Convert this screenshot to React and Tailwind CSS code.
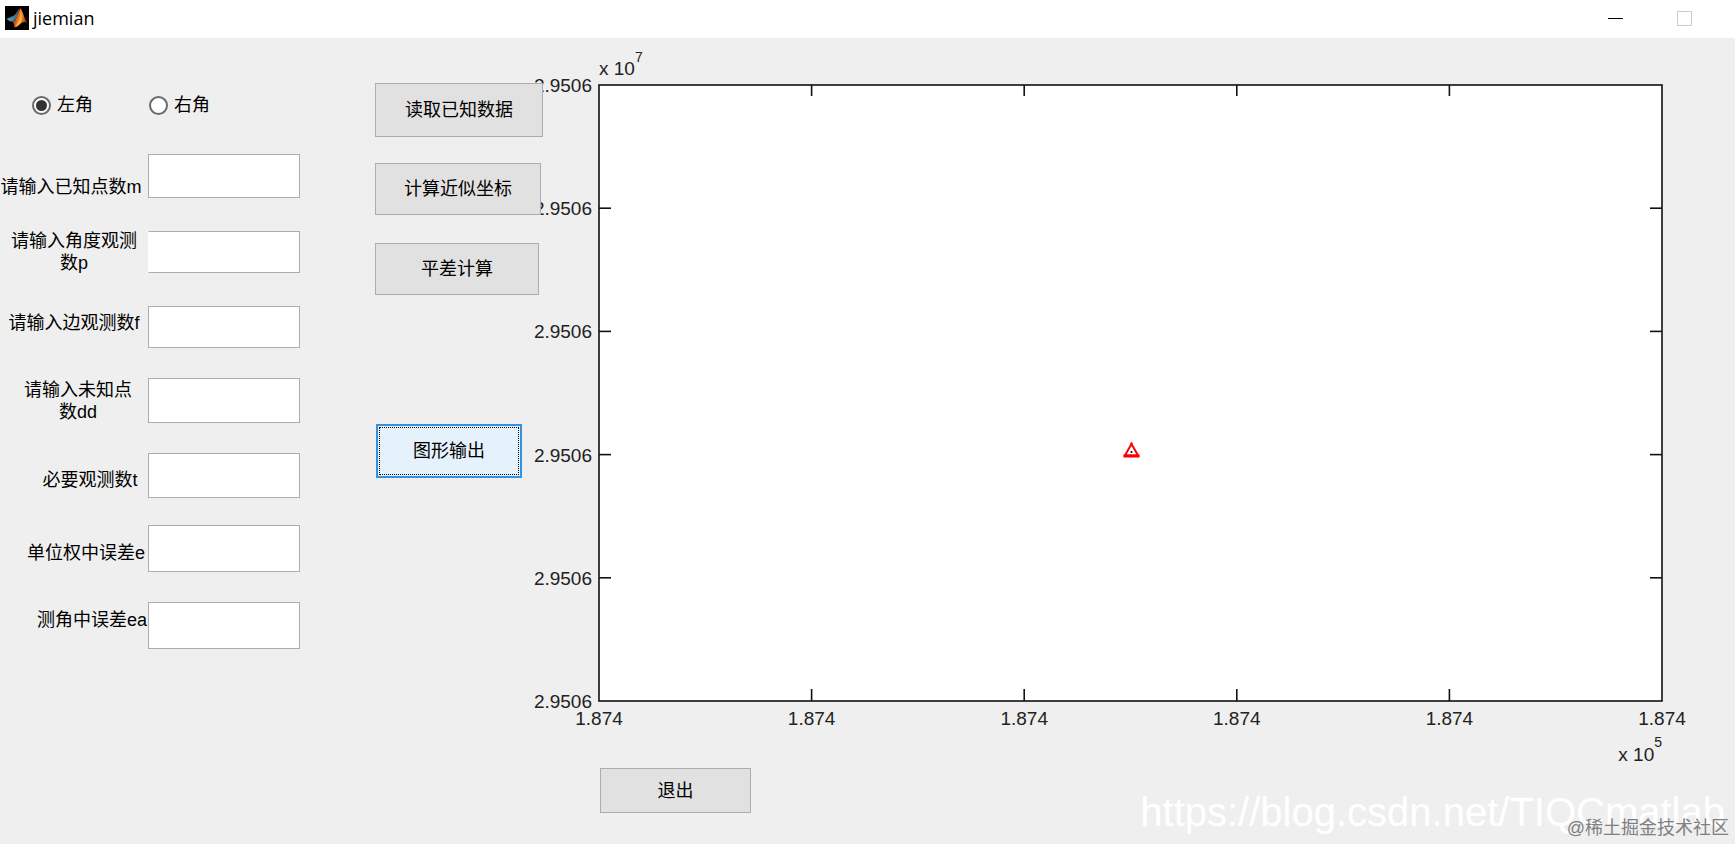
import React from "react";

const FIELDS = [
  { id: "m", lines: ["请输入已知点数m"], row: "items-end", label: "pr-1.5", input: "h-11" },
  { id: "p", lines: ["请输入角度观测", "数p"], row: "mt-8 items-center", label: "", input: "h-[42px] border-l-white" },
  { id: "f", lines: ["请输入边观测数f"], row: "mt-8 items-center", label: "pb-2", input: "h-[42px]" },
  { id: "dd", lines: ["请输入未知点", "数dd"], row: "mt-[30px] items-center", label: "pl-2", input: "h-[45px]" },
  { id: "t", lines: ["必要观测数t"], row: "mt-[30px] items-center", label: "pt-2 pl-8", input: "h-[45px]" },
  { id: "e", lines: ["单位权中误差e"], row: "mt-[27px] items-center", label: "pt-2 pl-6", input: "h-[47px]" },
  { id: "ea", lines: ["测角中误差ea"], row: "mt-[30px] items-center", label: "pb-3 pl-9", input: "h-[47px]" },
];

const STEPS = [0, 20, 40, 60, 80, 100];

function MatlabLogo() {
  return (
    <svg viewBox="0 0 24 24" className="mt-1.5 h-6 w-6 shrink-0 self-start" aria-hidden="true">
      <defs>
        <linearGradient id="flame" x1="0" y1="0" x2="1" y2="0.3">
          <stop offset="0" stopColor="#6b1d10" />
          <stop offset="0.45" stopColor="#e8641b" />
          <stop offset="0.65" stopColor="#f79a2c" />
          <stop offset="1" stopColor="#a8300f" />
        </linearGradient>
        <linearGradient id="wing" x1="0" y1="0" x2="1" y2="0">
          <stop offset="0" stopColor="#58a9c4" />
          <stop offset="1" stopColor="#27617f" />
        </linearGradient>
      </defs>
      <rect width="24" height="24" fill="#000" />
      <path d="M1.5 13 L7.5 10.2 Q9.5 9.6 11 7.4 Q12.6 4.4 14.6 2.6 L11.8 11.6 L8.2 16 Q6.6 14.8 5.2 15.4 Z" fill="url(#wing)" />
      <path d="M15.2 2.2 C17.4 3.6 18.6 11.2 22.4 17.4 C19.6 15 17.4 16 15.2 18 C13.2 19.8 11.8 21.6 9.4 21.2 C9.4 18.6 8.6 17 7.8 16.2 C11 14.6 12.6 8 15.2 2.2 Z" fill="url(#flame)" />
      <path d="M15 5 C15.6 9 15 14 10.4 20.4 C13 20 15 17.6 16.4 15.6 C17 11.6 16.2 8 15 5 Z" fill="#f9b13c" />
    </svg>
  );
}

function Radio({ label, checked }) {
  return (
    <label className="flex items-center gap-1.5 leading-5">
      <input
        type="radio"
        name="angle"
        defaultChecked={checked}
        className="grid h-[19px] w-[19px] appearance-none place-items-center rounded-full border-2 border-[#6a6a6a] bg-white before:h-[11px] before:w-[11px] before:rounded-full checked:before:bg-[#333333]"
      />
      {label}
    </label>
  );
}

function PushButton({ children, className }) {
  return (
    <button type="button" className={`border border-[#adadad] bg-[#e1e1e1] ${className}`}>
      {children}
    </button>
  );
}

function Plot() {
  return (
    <svg className="block h-[616px] w-full overflow-visible" role="img" aria-label="Plot" fontSize="19" fill="#222">
      <rect width="100%" height="100%" fill="#fff" stroke="#111" strokeWidth="1.6" />
      {STEPS.map((s) => (
        <g key={s}>
          <text x="-7" y={`${s}%`} dy="7" textAnchor="end">2.9506</text>
          <text x={`${s}%`} y="100%" dy="24" textAnchor="middle">1.874</text>
        </g>
      ))}
      <g stroke="#111" strokeWidth="1.6">
        {STEPS.slice(1, 5).map((s) => (
          <g key={s}>
            <line x1="0" x2="12" y1={`${s}%`} y2={`${s}%`} />
            <svg x="100%" y={`${s}%`} className="overflow-visible"><line x1="-12" x2="0" y1="0" y2="0" /></svg>
            <line x1={`${s}%`} x2={`${s}%`} y1="0" y2="11" />
            <svg x={`${s}%`} y="100%" className="overflow-visible"><line x1="0" x2="0" y1="-12" y2="0" /></svg>
          </g>
        ))}
      </g>
      <text x="0" y="-10">
        x 10<tspan dy="-13" fontSize="14">7</tspan>
      </text>
      <text x="100%" y="100%" dy="60" textAnchor="end">
        x 10<tspan dy="-14" fontSize="14">5</tspan>
      </text>
      <svg x="50%" y="59.5%" className="overflow-visible">
        <path d="M1 -7.5 L7.6 4 L-5.6 4 Z" fill="#fff" stroke="#f00" strokeWidth="2" />
        <path d="M-7 4.5 H9" stroke="#f00" strokeWidth="3" />
        <path d="M1 -9 V-6" stroke="#f00" strokeWidth="2" />
        <circle cx="1" cy="0.5" r="1.1" fill="#111" />
      </svg>
    </svg>
  );
}

export default function App() {
  return (
    <div className="relative flex min-h-screen flex-col overflow-hidden bg-[#efefef] font-['Liberation_Sans','Noto_Sans_CJK_SC',sans-serif] text-lg text-black">
      <header className="flex h-[38px] items-center bg-white pr-[41px] pb-px pl-[5px]">
        <MatlabLogo />
        <h1 className="ml-1 flex-1 pb-px font-['Open_Sans',sans-serif] text-lg leading-6">jiemian</h1>
        <button type="button" aria-label="Minimize" className="grid h-[25px] w-[19px] place-items-center">
          <span className="h-px w-[15px] bg-black" />
        </button>
        <button type="button" aria-label="Maximize" disabled className="ml-[50px] grid h-[25px] w-[19px] place-items-center">
          <span className="h-[15px] w-[15px] border border-[#cccccc]" />
        </button>
      </header>

      <main className="flex flex-1 items-start">
        <form className="w-[300px] shrink-0 pt-[57px]">
          <div className="flex gap-14 pl-8">
            <Radio label="左角" checked />
            <Radio label="右角" />
          </div>
          <div className="mt-[39px]">
            {FIELDS.map((f) => (
              <div key={f.id} className={`flex ${f.row}`}>
                <label htmlFor={f.id} className={`w-[148px] shrink-0 text-center leading-[22px] whitespace-nowrap ${f.label}`}>
                  {f.lines.map((line) => (
                    <span key={line} className="block">{line}</span>
                  ))}
                </label>
                <input id={f.id} type="text" className={`w-[152px] border border-[#abadb3] bg-white px-2 ${f.input}`} />
              </div>
            ))}
          </div>
        </form>

        <div className="relative z-10 ml-[75px] flex w-[168px] shrink-0 flex-col items-start pt-[45px]">
          <PushButton className="h-[54px] w-[168px]">读取已知数据</PushButton>
          <PushButton className="mt-[26px] h-[52px] w-[166px]">计算近似坐标</PushButton>
          <PushButton className="mt-[28px] h-[52px] w-[164px]">平差计算</PushButton>
          <button
            type="button"
            className="mt-[129px] ml-px h-[54px] w-[146px] border-2 border-[#3291e3] bg-[#e5f1fb] outline-1 -outline-offset-4 outline-black outline-dotted"
          >
            图形输出
          </button>
        </div>

        <section className="mr-[73px] ml-14 min-w-0 flex-1 pt-[47px]">
          <Plot />
          <PushButton className="mt-[67px] ml-px h-[45px] w-[151px]">退出</PushButton>
        </section>
      </main>

      <p className="absolute right-2.5 bottom-2 text-[40px] leading-[48px] text-white">https://blog.csdn.net/TIQCmatlab</p>
      <p className="absolute right-1.5 bottom-1 leading-6 text-[#808080]">@稀土掘金技术社区</p>
    </div>
  );
}
